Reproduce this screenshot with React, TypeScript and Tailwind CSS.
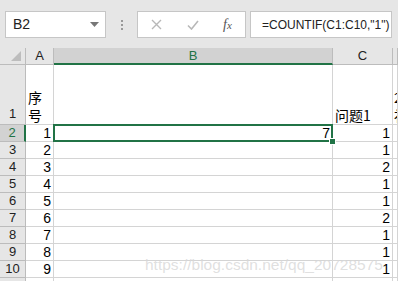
import React from "react";

const font = { fontFamily: '"Liberation Sans", Arial, "Noto Sans CJK SC", sans-serif' };

const rows: { n: number; a: string; b: string; c: string }[] = [
  { n: 2, a: "1", b: "7", c: "1" },
  { n: 3, a: "2", b: "", c: "1" },
  { n: 4, a: "3", b: "", c: "2" },
  { n: 5, a: "4", b: "", c: "1" },
  { n: 6, a: "5", b: "", c: "1" },
  { n: 7, a: "6", b: "", c: "2" },
  { n: 8, a: "7", b: "", c: "1" },
  { n: 9, a: "8", b: "", c: "1" },
  { n: 10, a: "9", b: "", c: "1" },
];

const cell = "border-r border-b border-[#d4d4d4] bg-white overflow-hidden";
const head = "border-r border-b border-[#bcbcbc] bg-[#e6e6e6] text-[13px] text-[#222] flex items-center justify-center";

function FormulaBar() {
  return (
    <div className="h-[48px] bg-[#e6e6e6] flex items-start pt-[11px] pl-[5px]">
      <div className="w-[101px] h-[27px] bg-white border border-[#c6c6c6] flex items-center justify-between pl-[7px] pr-[6px]">
        <span className="text-[14px] text-[#222]">B2</span>
        <svg width="9" height="5" viewBox="0 0 9 5"><path d="M0 0h9L4.5 5z" fill="#777" /></svg>
      </div>
      <div className="w-[31px] h-[27px] flex flex-col items-center justify-center gap-[2px]">
        <span className="w-[2px] h-[2px] bg-[#999]" />
        <span className="w-[2px] h-[2px] bg-[#999]" />
        <span className="w-[2px] h-[2px] bg-[#999]" />
      </div>
      <div className="w-[109px] h-[27px] bg-white border border-[#c6c6c6] flex items-center">
        <svg className="ml-[13px]" width="11" height="11" viewBox="0 0 11 11">
          <path d="M1 1l9 9M10 1l-9 9" stroke="#b8b8b8" strokeWidth="1.4" />
        </svg>
        <svg className="ml-[25px]" width="12" height="10" viewBox="0 0 12 10">
          <path d="M1 5.5l3.5 3.5L11 1" stroke="#b8b8b8" strokeWidth="1.6" fill="none" />
        </svg>
        <span className="ml-[24px] text-[14px] italic text-[#555]" style={{ fontFamily: '"Liberation Serif", serif' }}>
          f<span className="text-[11px]">x</span>
        </span>
      </div>
      <div className="ml-[4px] w-[142px] h-[27px] bg-white border border-[#c6c6c6] flex items-center pl-[11px] overflow-hidden whitespace-nowrap">
        <span className="text-[12px] text-[#222]">=COUNTIF(C1:C10,"1")</span>
      </div>
    </div>
  );
}

export default function App() {
  return (
    <div className="w-[398px] h-[281px] overflow-hidden bg-white relative" style={font}>
      <FormulaBar />
      <div className="grid grid-cols-[26px_28px_279px_60px_1fr] grid-rows-[17px_60px_repeat(10,17px)]">
        {/* column headers */}
        <div className={head + " relative"}>
          <svg className="absolute right-[4px] bottom-[3px]" width="10" height="10" viewBox="0 0 10 10">
            <path d="M10 0v10H0z" fill="#bdbdbd" />
          </svg>
        </div>
        <div className={head}>A</div>
        <div className="border-r border-[#bcbcbc] border-b-2 border-b-[#217346] bg-[#d2d2d2] text-[13px] text-[#217346] flex items-center justify-center">B</div>
        <div className={head}>C</div>
        <div className={head}></div>

        {/* row 1 */}
        <div className={head + " !items-end pb-[1px]"}>1</div>
        <div className={cell + " flex items-end pl-[2px] text-[14px] leading-[18px] text-black"} style={{ fontFamily: '"Noto Sans CJK SC", sans-serif' }}>
          序<br />号
        </div>
        <div className={cell}></div>
        <div className={cell + " flex items-end pl-[2px] text-[14px] leading-[18px] text-black whitespace-nowrap"} style={{ fontFamily: '"Noto Sans CJK SC", sans-serif' }}>
          问题1
        </div>
        <div className={cell + " flex flex-col justify-end text-[14px] leading-[18px] text-black pl-[1px]"} style={{ fontFamily: '"Noto Sans CJK SC", sans-serif' }}>
          <span>2</span>
          <span>补</span>
        </div>

        {rows.map((r) => {
          const sel = r.n === 2;
          return (
            <React.Fragment key={r.n}>
              <div
                className={
                  sel
                    ? "border-b border-[#bcbcbc] border-r-2 border-r-[#217346] bg-[#d2d2d2] text-[13px] text-[#217346] flex items-center justify-center"
                    : head
                }
              >
                {r.n}
              </div>
              <div className={cell + " flex items-center justify-end pr-[2px] text-[14px] text-black"}>{r.a}</div>
              <div className={cell + " relative flex items-center justify-end pr-[2px] text-[14px] text-black" + (sel ? " !overflow-visible z-10" : "")}>
                {r.b}
                {sel && (
                  <>
                    <div className="absolute -left-[1px] -top-[1px] -right-[1px] -bottom-[1px] border-2 border-[#217346]" />
                    <div className="absolute -right-[4px] -bottom-[4px] w-[7px] h-[7px] bg-[#217346] border border-white" />
                  </>
                )}
              </div>
              <div className={cell + " flex items-center justify-end pr-[2px] text-[14px] text-black"}>{r.c}</div>
              <div className={cell}></div>
            </React.Fragment>
          );
        })}
        <div className={head}></div>
        <div className={cell}></div>
        <div className={cell}></div>
        <div className={cell}></div>
        <div className={cell}></div>
      </div>
      <div className="absolute left-[145px] top-[253px] text-[15.5px] text-[#d8d8d8]/80 whitespace-nowrap pointer-events-none">
        https://blog.csdn.net/qq_20728575
      </div>
    </div>
  );
}
